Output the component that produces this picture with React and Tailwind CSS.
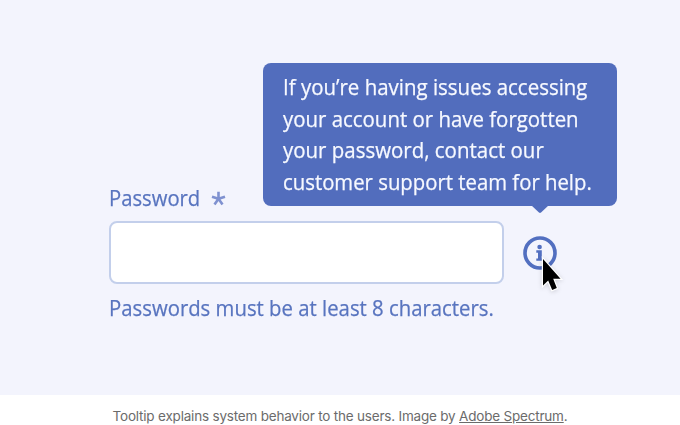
function InfoIcon() {
  return (
    <svg className="block h-[34px] w-[34px]" viewBox="0 0 34 34" fill="none">
      <circle cx="17" cy="17" r="15" stroke="#526fc0" strokeWidth="3.6" />
      <circle cx="16.6" cy="11" r="2.3" fill="#526fc0" />
      <path d="M13.3 14.3H18.8V22.4H20.2V24.8H13.3V22.4H15V16.7H13.3Z" fill="#526fc0" />
    </svg>
  );
}

function Cursor() {
  return (
    <svg className="absolute left-[16px] top-[20px] h-[40px] w-[28px] drop-shadow-sm" viewBox="0 0 28 40">
      <path d="M4 3V29.5L9.2 24.6L13.2 34L17.8 32L14.2 22.8H21.5Z" fill="#000" stroke="#fff" strokeWidth="2.4" paintOrder="stroke" />
    </svg>
  );
}

function Asterisk() {
  return (
    <svg className="ml-[11px] mt-[10px] h-[15px] w-[15px]" viewBox="0 0 15 15">
      <path d="M7.5 7.8V.8M7.5 7.8L1 5.7M7.5 7.8L14 5.7M7.5 7.8L3.5 13.5M7.5 7.8L11.5 13.5" stroke="#7f91d0" strokeWidth="2.6" />
    </svg>
  );
}

export default function App() {
  return (
    <div className="flex h-[425px] w-[680px] flex-col overflow-hidden bg-white font-['Open_Sans',sans-serif]">
      <div className="relative h-[395px] shrink-0 bg-[#f3f4fd] pl-[109px] pt-[181px] text-[22px] text-[#5874bf] [-webkit-text-stroke:0.25px]">
        <div className="flex h-[40px] items-start leading-[32px]">
          <span className="w-[91px] origin-left scale-x-[.92] whitespace-nowrap">Password</span>
          <Asterisk />
        </div>
        <div className="flex items-center gap-[19px]">
          <div className="h-[63px] w-[395px] rounded-[8px] border-2 border-[#c3cfeb] bg-white" />
          <div className="relative">
            <InfoIcon />
            <Cursor />
          </div>
        </div>
        <p className="mt-[7px] w-max origin-left scale-x-[.924] whitespace-nowrap leading-[32px]">Passwords must be at least 8 characters.</p>
        <div className="absolute left-[263px] top-[63px] h-[143px] w-[354px] rounded-[8px] bg-[#526dbd] pl-[20px] pt-[8px] leading-[31.6px] text-[#f7f9ff]">
          <div className="w-max origin-left scale-x-[.93]">If you’re having issues accessing</div>
          <div className="w-max origin-left scale-x-[.928]">your account or have forgotten</div>
          <div className="w-max origin-left scale-x-[.93]">your password, contact our</div>
          <div className="w-max origin-left scale-x-[.924]">customer support team for help.</div>
          <svg className="absolute left-[268px] top-[142px] h-[9px] w-[18px]" viewBox="0 0 18 9">
            <path d="M0 0H18L10 7.6Q9 8.4 8 7.6Z" fill="#526dbd" />
          </svg>
        </div>
      </div>
      <p className="mt-[11px] shrink-0 text-center font-['Inter',sans-serif] text-[13.5px] leading-[20px] tracking-[-0.2px] text-[#6b6b6b]">
        Tooltip explains system behavior to the users. Image by <span className="underline">Adobe Spectrum</span>.
      </p>
    </div>
  );
}
